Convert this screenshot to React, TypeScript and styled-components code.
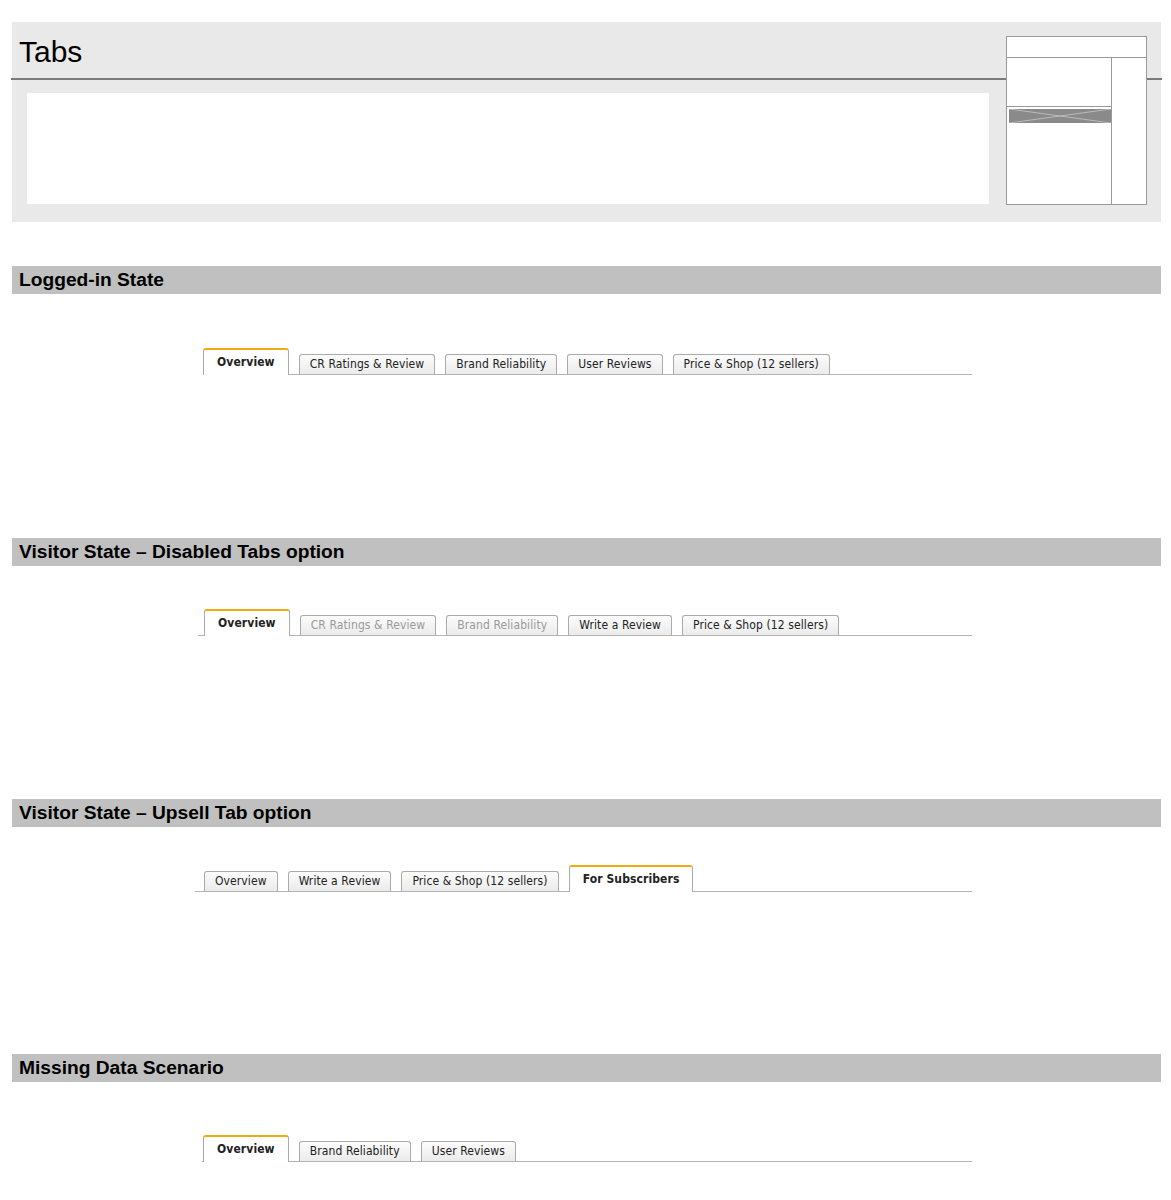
import styled, { createGlobalStyle } from 'styled-components';

type TabItem = {
  label: string;
  active?: boolean;
  disabled?: boolean;
};

type SectionData = {
  title: string;
  top: number;
  lineGap: number;
  lineLeft: number;
  tabsLeft: number;
  tabs: TabItem[];
};

const sections: SectionData[] = [
  {
    title: 'Logged-in State',
    top: 44,
    lineGap: 80,
    lineLeft: 203,
    tabsLeft: 203,
    tabs: [
      { label: 'Overview', active: true },
      { label: 'CR Ratings & Review' },
      { label: 'Brand Reliability' },
      { label: 'User Reviews' },
      { label: 'Price & Shop (12 sellers)' },
    ],
  },
  {
    title: 'Visitor State – Disabled Tabs option',
    top: 163,
    lineGap: 69,
    lineLeft: 198,
    tabsLeft: 204,
    tabs: [
      { label: 'Overview', active: true },
      { label: 'CR Ratings & Review', disabled: true },
      { label: 'Brand Reliability', disabled: true },
      { label: 'Write a Review' },
      { label: 'Price & Shop (12 sellers)' },
    ],
  },
  {
    title: 'Visitor State – Upsell Tab option',
    top: 163,
    lineGap: 64,
    lineLeft: 195,
    tabsLeft: 204,
    tabs: [
      { label: 'Overview' },
      { label: 'Write a Review' },
      { label: 'Price & Shop (12 sellers)' },
      { label: 'For Subscribers', active: true },
    ],
  },
  {
    title: 'Missing Data Scenario',
    top: 162,
    lineGap: 79,
    lineLeft: 202,
    tabsLeft: 203,
    tabs: [
      { label: 'Overview', active: true },
      { label: 'Brand Reliability' },
      { label: 'User Reviews' },
    ],
  },
];

const App: React.FC = () => {
  return (
    <Page>
      <GlobalStyle />
      <TopPanel>
        <PanelTitle>Tabs</PanelTitle>
        <PanelRule />
        <PanelBody />
        <Thumb>
          <ThumbHeader />
          <ThumbMain>
            <ThumbUpper />
            <ThumbBar>
              <svg width="100%" height="100%" viewBox="0 0 102 14" preserveAspectRatio="none">
                <line x1="0" y1="0" x2="102" y2="14" stroke="#c8c8c8" strokeWidth="0.8" />
                <line x1="0" y1="14" x2="102" y2="0" stroke="#c8c8c8" strokeWidth="0.8" />
              </svg>
            </ThumbBar>
          </ThumbMain>
          <ThumbSide />
        </Thumb>
      </TopPanel>

      {sections.map((s) => (
        <Section key={s.title} $top={s.top}>
          <SectionHeader>{s.title}</SectionHeader>
          <TabStrip $gap={s.lineGap} $left={s.lineLeft} $inset={s.tabsLeft - s.lineLeft}>
            {s.tabs.map((t) => (
              <Tab key={t.label} $active={t.active} $disabled={t.disabled}>
                {t.label}
              </Tab>
            ))}
          </TabStrip>
        </Section>
      ))}
    </Page>
  );
};

export default App;

const GlobalStyle = createGlobalStyle`
  html, body {
    margin: 0;
    padding: 0;
    background: #ffffff;
  }
  body {
    font-family: "Liberation Sans", Arial, sans-serif;
  }
`;

const Page = styled.div`
  width: 1171px;
  height: 1200px;
  overflow: hidden;
  padding-top: 22px;
  box-sizing: border-box;
`;

const TopPanel = styled.div`
  position: relative;
  margin-left: 12px;
  width: 1149px;
  height: 200px;
  background: #e9e9e9;
  display: flex;
  flex-direction: column;
`;

const PanelTitle = styled.div`
  height: 56px;
  box-sizing: border-box;
  padding: 12px 0 0 7px;
  font-size: 30px;
  line-height: 36px;
  color: #000;
`;

const PanelRule = styled.div`
  height: 2px;
  margin: 0 -1px;
  background: #7a7a7a;
`;

const PanelBody = styled.div`
  margin: 13px 0 0 15px;
  width: 962px;
  height: 111px;
  background: #ffffff;
`;

const Thumb = styled.div`
  position: absolute;
  left: 994px;
  top: 14px;
  width: 141px;
  height: 169px;
  box-sizing: border-box;
  border: 1px solid #9a9a9a;
  background: #fff;
  display: grid;
  grid-template-columns: 105px 1fr;
  grid-template-rows: 21px 1fr;
`;

const ThumbHeader = styled.div`
  grid-column: 1 / 3;
  border-bottom: 1px solid #9a9a9a;
`;

const ThumbMain = styled.div`
  display: flex;
  flex-direction: column;
  border-right: 1px solid #9a9a9a;
`;

const ThumbUpper = styled.div`
  height: 48px;
  border-bottom: 1px solid #9a9a9a;
`;

const ThumbBar = styled.div`
  margin: 2px 0 0 2px;
  height: 14px;
  background: #8a8a8a;
  svg {
    display: block;
  }
`;

const ThumbSide = styled.div``;

const Section = styled.div<{ $top: number }>`
  margin-top: ${(p) => p.$top}px;
`;

const SectionHeader = styled.div`
  margin-left: 12px;
  width: 1149px;
  height: 28px;
  box-sizing: border-box;
  padding-left: 7px;
  background: #c0c0c0;
  font-size: 19.2px;
  font-weight: bold;
  line-height: 28px;
  color: #000;
`;

const TabStrip = styled.div<{ $gap: number; $left: number; $inset: number }>`
  display: flex;
  align-items: flex-end;
  gap: 10px;
  margin-top: ${(p) => p.$gap - 26}px;
  margin-left: ${(p) => p.$left}px;
  padding-left: ${(p) => p.$inset}px;
  width: ${(p) => 972 - p.$left}px;
  box-sizing: border-box;
  height: 27px;
  border-bottom: 1px solid #b4b4b4;
`;

const Tab = styled.div<{ $active?: boolean; $disabled?: boolean }>`
  box-sizing: border-box;
  height: ${(p) => (p.$active ? 27 : 20)}px;
  margin-bottom: ${(p) => (p.$active ? -1 : 0)}px;
  border: 1px solid #ababab;
  border-bottom: none;
  border-top: ${(p) => (p.$active ? '2px solid #f2aa10' : '1px solid #ababab')};
  border-radius: 3px 3px 0 0;
  background: ${(p) =>
    p.$active ? '#ffffff' : 'linear-gradient(#fcfcfc, #ebebeb)'};
  font-family: "DejaVu Sans Condensed", "DejaVu Sans", Verdana, sans-serif;
  font-size: 12px;
  letter-spacing: 0.1px;
  font-weight: ${(p) => (p.$active ? 'bold' : 'normal')};
  line-height: ${(p) => (p.$active ? 24 : 19)}px;
  padding: 0 ${(p) => (p.$active ? 13 : 10)}px;
  color: ${(p) => (p.$disabled ? '#9a9a9a' : '#222')};
  white-space: nowrap;
`;
